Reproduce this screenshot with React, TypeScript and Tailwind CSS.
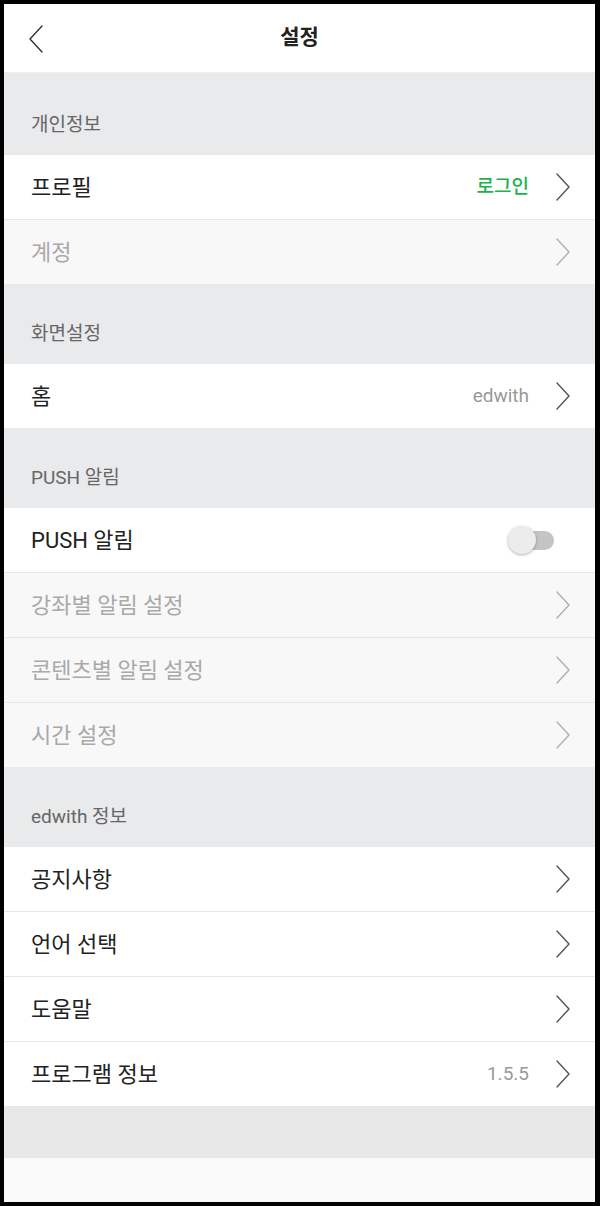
import React from "react";

const font = { fontFamily: 'Roboto, "Noto Sans CJK KR", sans-serif' };

type Row = {
  label: string;
  value?: string;
  valueTone?: "green" | "gray";
  disabled?: boolean;
  toggle?: boolean;
};

type Section = { title: string; rows: Row[]; first?: boolean };

const sections: Section[] = [
  {
    title: "개인정보",
    first: true,
    rows: [
      { label: "프로필", value: "로그인", valueTone: "green" },
      { label: "계정", disabled: true },
    ],
  },
  { title: "화면설정", rows: [{ label: "홈", value: "edwith", valueTone: "gray" }] },
  {
    title: "PUSH 알림",
    rows: [
      { label: "PUSH 알림", toggle: true },
      { label: "강좌별 알림 설정", disabled: true },
      { label: "콘텐츠별 알림 설정", disabled: true },
      { label: "시간 설정", disabled: true },
    ],
  },
  {
    title: "edwith 정보",
    rows: [
      { label: "공지사항" },
      { label: "언어 선택" },
      { label: "도움말" },
      { label: "프로그램 정보", value: "1.5.5", valueTone: "gray" },
    ],
  },
];

function Chevron({ dir = "right", color }: { dir?: "left" | "right"; color: string }) {
  return (
    <svg width="14" height="28" viewBox="0 0 14 28" fill="none" className="shrink-0">
      <path
        d={dir === "right" ? "M1 1 L13 14 L1 27" : "M13 1 L1 14 L13 27"}
        stroke={color}
        strokeWidth="1.4"
        strokeLinecap="round"
        strokeLinejoin="round"
      />
    </svg>
  );
}

function Toggle() {
  return (
    <div className="relative mr-[16px] h-[30px] w-[46px]">
      <div className="absolute right-0 top-[6px] h-[19px] w-[36px] rounded-full bg-[#c4c4c4]" />
      <div className="absolute left-0 top-[1px] h-[28px] w-[28px] rounded-full bg-[#ececec] shadow-[0_1px_3px_rgba(0,0,0,0.3)]" />
    </div>
  );
}

function SettingRow({ row, last }: { row: Row; last: boolean }) {
  return (
    <div
      className={`box-content flex h-[64px] items-center pl-[27px] pr-[25px] ${row.disabled ? "bg-[#f8f8f8]" : "bg-white"} ${
        last ? "" : "border-b border-[#e6e6e6]"
      }`}
    >
      <span className={`flex-1 text-[22px] ${row.disabled ? "text-[#a9a9a9]" : "text-[#222]"}`}>{row.label}</span>
      {row.value && (
        <span
          className={`mr-[27px] text-[19px] ${
            row.valueTone === "green" ? "font-medium text-[#21b24b]" : "text-[#999]"
          }`}
        >
          {row.value}
        </span>
      )}
      {row.toggle ? <Toggle /> : <Chevron color={row.disabled ? "#b0b0b0" : "#555"} />}
    </div>
  );
}

export default function App() {
  return (
    <div className="h-[1206px] w-[600px] bg-black pb-[4px] pl-[4px] pr-[5px] pt-[4px]" style={font}>
      <div className="flex h-full flex-col overflow-hidden bg-[#fafafa]">
        <header className="relative flex h-[69px] shrink-0 items-center justify-center border-b border-[#efefef] bg-white">
          <div className="absolute left-[25px] top-[21px]">
            <Chevron dir="left" color="#333" />
          </div>
          <h1 className="text-[21px] font-bold text-[#222]">설정</h1>
        </header>
        {sections.map((s) => (
          <section key={s.title}>
            <div
              className={`flex items-end bg-[#e9eaec] pb-[20px] pl-[27px] ${s.first ? "h-[82px]" : "h-[80px]"}`}
            >
              <span className="text-[19px] leading-[20px] text-[#666]">{s.title}</span>
            </div>
            {s.rows.map((r, i) => (
              <SettingRow key={r.label} row={r} last={i === s.rows.length - 1} />
            ))}
          </section>
        ))}
        <div className="h-[52px] shrink-0 bg-[#e8e8e8]" />
        <div className="flex-1 bg-[#fafafa]" />
      </div>
    </div>
  );
}
